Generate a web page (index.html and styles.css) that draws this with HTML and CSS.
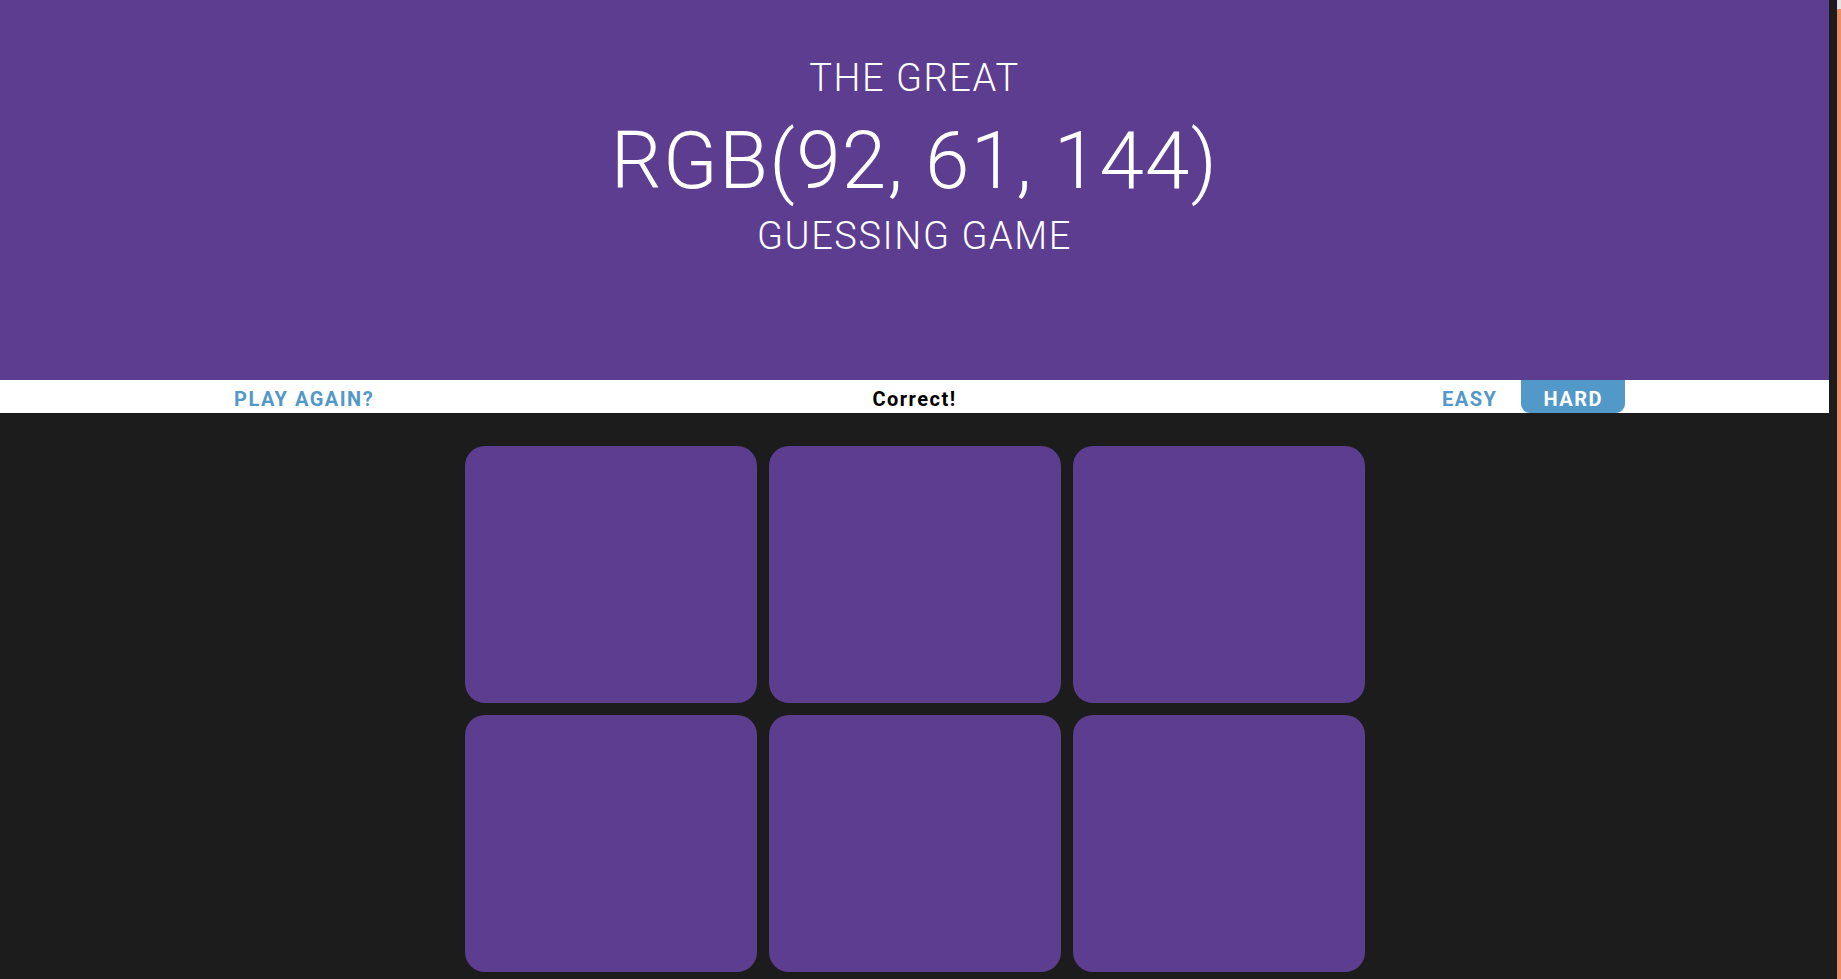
FILE: index.html
```html
<!DOCTYPE html>
<html lang="en">
<head>
<meta charset="utf-8">
<title>Color Game</title>
<link rel="stylesheet" href="styles.css">
</head>
<body>
<div class="page">
  <main class="app">
    <header class="hero">
      <h1 class="title">
        <span class="line small">THE GREAT</span>
        <span class="line big">RGB(92, 61, 144)</span>
        <span class="line small">GUESSING GAME</span>
      </h1>
    </header>
    <nav class="stripe">
      <div class="stripe-left">
        <button class="btn">Play again?</button>
      </div>
      <span class="message">Correct!</span>
      <div class="stripe-right">
        <button class="btn">Easy</button>
        <button class="btn selected">Hard</button>
      </div>
    </nav>
    <section class="board">
      <div class="square"></div>
      <div class="square"></div>
      <div class="square"></div>
      <div class="square"></div>
      <div class="square"></div>
      <div class="square"></div>
    </section>
  </main>
  <aside class="rail"><div class="thumb"></div></aside>
</div>
</body>
</html>
```

FILE: styles.css
```css
html, body {
  margin: 0;
  padding: 0;
  height: 100%;
}

body {
  background: #1b1c1b;
  font-family: Roboto, "Liberation Sans", sans-serif;
  overflow: hidden;
}

.page {
  display: flex;
  height: 979px;
}

.app {
  flex: 1;
  min-width: 0;
  display: flex;
  flex-direction: column;
}

.hero {
  background: #5c3d90;
  height: 380px;
  box-sizing: border-box;
  padding-top: 55px;
  color: #ffffff;
  text-align: center;
}

.title {
  margin: 0;
  font-weight: 300;
}

.line {
  display: block;
}

.small {
  font-size: 38px;
  line-height: 46px;
  letter-spacing: 1.6px;
}

.small + .big + .small {
  line-height: 28px;
}

.big {
  font-size: 80px;
  line-height: 121px;
  letter-spacing: 1.3px;
}

.stripe {
  background: #ffffff;
  height: 33px;
  display: grid;
  grid-template-columns: 1fr auto 1fr;
}

.stripe-left {
  padding-left: 210px;
  display: flex;
}

.stripe-right {
  justify-self: end;
  padding-right: 204px;
  display: flex;
}

.btn {
  border: none;
  background: none;
  margin: 0;
  height: 33px;
  box-sizing: border-box;
  padding: 5px 24px 0;
  font-family: Roboto, "Liberation Sans", sans-serif;
  font-weight: 700;
  font-size: 20px;
  line-height: 28px;
  letter-spacing: 1.5px;
  text-transform: uppercase;
  color: #5298c9;
  cursor: pointer;
}

.btn.selected {
  background: #5298c9;
  color: #ffffff;
  border-radius: 0 0 9px 9px;
  padding: 5px 22px 0;
}

.message {
  box-sizing: border-box;
  height: 33px;
  padding-top: 5px;
  font-weight: 700;
  font-size: 20px;
  line-height: 28px;
  letter-spacing: 1.5px;
  color: #000000;
}

.board {
  display: grid;
  grid-template-columns: repeat(3, 292px);
  grid-auto-rows: 257px;
  gap: 12px;
  justify-content: center;
  padding-top: 33px;
}

.square {
  background: #5c3d90;
  border-radius: 20px;
}

.rail {
  width: 12px;
  flex: none;
  background: #1b1c1b;
  display: flex;
  justify-content: flex-end;
}

.thumb {
  width: 4px;
  background: #ef8f68;
  border-top: 9px solid #e4e4e4;
}
```
